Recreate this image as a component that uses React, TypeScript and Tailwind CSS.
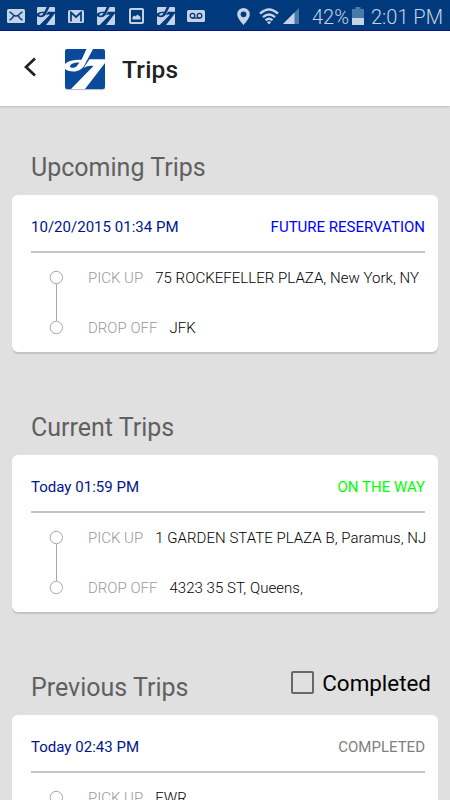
import type { ReactNode } from "react";

type Trip = {
  title: string;
  date: string;
  status: string;
  statusClass: string;
  pickUp: string;
  dropOff: string;
};

const trips: Trip[] = [
  {
    title: "Upcoming Trips",
    date: "10/20/2015 01:34 PM",
    status: "FUTURE RESERVATION",
    statusClass: "text-[#0000ff]",
    pickUp: "75 ROCKEFELLER PLAZA, New York, NY",
    dropOff: "JFK",
  },
  {
    title: "Current Trips",
    date: "Today 01:59 PM",
    status: "ON THE WAY",
    statusClass: "text-[#00ff00]",
    pickUp: "1 GARDEN STATE PLAZA B, Paramus, NJ",
    dropOff: "4323 35 ST, Queens,",
  },
  {
    title: "Previous Trips",
    date: "Today 02:43 PM",
    status: "COMPLETED",
    statusClass: "text-[#808080]",
    pickUp: "EWR",
    dropOff: "",
  },
];

// "d7" mark, shared by the status bar and the header
const LogoMark = () => (
  <>
    <path
      fillRule="evenodd"
      d="M21.5 0H28L19.5 16C17.5 20 13.5 22.5 8.5 22.5C4.5 22.5 1.5 21.5 0 20V15C3 12 8 10.7 16.5 10.7ZM5 17.5C5.5 19.3 9.5 19.2 11.5 17.5L14.5 13.6C10.5 13.4 5 14.8 5 17.5Z"
    />
    <path d="M24.5 10.3H40V14L20 40H6L28.5 17C25 16.2 22 17 18.5 19Z" />
  </>
);

const StatusLogo = () => (
  <svg width="18" height="18" viewBox="0 0 40 40" className="shrink-0">
    <rect width="40" height="40" rx="2" fill="#c5d3e6" />
    <g fill="#003a7d">
      <LogoMark />
    </g>
  </svg>
);

const StatusBar = () => (
  <div className="flex h-[31px] shrink-0 items-center border-b border-[#000080] bg-[#003a7d] pt-[2px] text-[#c5d3e6]">
    <svg width="18" height="14" viewBox="0 0 18 14" className="ml-[7px] shrink-0">
      <rect width="18" height="14" rx="1.5" fill="currentColor" />
      <path
        d="M2.5 3C5 3.5 6 7 9 7S13 3.5 15.5 3M2.5 11C4.5 10.5 5.5 8.5 6.8 7M15.5 11C13.5 10.5 12.5 8.5 11.2 7"
        fill="none"
        stroke="#003a7d"
        strokeWidth="1.5"
      />
    </svg>
    <div className="-mt-px ml-3 flex">
      <StatusLogo />
    </div>
    <svg width="16" height="13" viewBox="0 0 16 13" className="ml-[13px] shrink-0">
      <rect width="16" height="13" rx="1.5" fill="currentColor" />
      <path d="M3 11.5V2.5L8 7L13 2.5V11.5" fill="none" stroke="#003a7d" strokeWidth="1.7" />
    </svg>
    <div className="-mt-px ml-[13px] flex">
      <StatusLogo />
    </div>
    <svg width="15" height="16" viewBox="0 0 15 16" className="ml-[14px] shrink-0">
      <rect x="1" y="1" width="13" height="14" rx="1" fill="none" stroke="currentColor" strokeWidth="2" />
      <path d="M3.5 11.5V9L5.5 7.5L6.5 8.5L8.5 6.5L11.5 9V11.5Z" fill="currentColor" />
    </svg>
    <div className="-mt-px ml-[13px] flex">
      <StatusLogo />
    </div>
    <svg width="18" height="12" viewBox="0 0 18 12" className="ml-3 shrink-0">
      <rect width="18" height="12" rx="1.5" fill="currentColor" />
      <g fill="none" stroke="#003a7d" strokeWidth="1.3">
        <circle cx="5.5" cy="5.7" r="2.3" />
        <circle cx="12.5" cy="5.7" r="2.3" />
        <path d="M5.5 8H12.5" />
      </g>
    </svg>
    <svg width="13" height="17" viewBox="0 0 13 17" className="ml-8 shrink-0">
      <path
        d="M6.5 0A6.3 6.3 0 0 0 .2 6.3C.2 10.5 6.5 17 6.5 17S12.8 10.5 12.8 6.3A6.3 6.3 0 0 0 6.5 0ZM6.5 3.4A2.9 2.9 0 1 1 6.5 9.2A2.9 2.9 0 0 1 6.5 3.4Z"
        fill="currentColor"
      />
    </svg>
    <svg width="20" height="17" viewBox="0 0 20 17" className="ml-[9px] shrink-0">
      <g fill="none" stroke="currentColor" strokeWidth="2.4">
        <path d="M1 5.6Q10 -2.8 19 5.6" />
        <path d="M4 9.2Q10 3.6 16 9.2" />
        <path d="M6.6 12.4Q10 9.2 13.4 12.4" />
      </g>
      <path d="M7.8 14Q10 12.3 12.2 14L10 16.5Z" fill="currentColor" />
    </svg>
    <svg width="16" height="16" viewBox="0 0 16 16" className="ml-1 shrink-0">
      <path d="M0 16L16 0V16Z" fill="#4b78ab" />
      <path d="M0 16L11.5 4.5V16Z" fill="currentColor" />
    </svg>
    <span className="ml-[13px] mt-px w-[39px] whitespace-nowrap text-[20px] leading-6 font-light">42%</span>
    <svg width="12" height="18" viewBox="0 0 12 18" className="-mt-px ml-[1px] shrink-0">
      <path d="M0 2H3.5V0H8.5V2H12V11H0Z" fill="#4b78ab" />
      <path d="M0 11H12V18H0Z" fill="currentColor" />
    </svg>
    <span className="ml-[7px] mt-px whitespace-nowrap text-[20px] leading-6 font-light">2:01 PM</span>
  </div>
);

const Header = () => (
  <header className="flex h-[75px] shrink-0 items-center bg-white shadow-[0_1px_2px_#bdbdbd]">
    <svg width="12" height="20" viewBox="0 0 12 20" className="ml-6 -mt-[4px]">
      <path d="M11 1.5L2 10L11 18.5" fill="none" stroke="#212121" strokeWidth="2.7" />
    </svg>
    <svg width="40" height="40" viewBox="0 0 40 40" className="ml-[29px] rounded-[2px] shadow-[0_1px_1px_#bbb]">
      <rect width="40" height="40" fill="#0b4a9b" />
      <g fill="#fff">
        <LogoMark />
      </g>
    </svg>
    <h1 className="ml-[17px] mt-[2px] text-[24.5px] leading-8 font-medium tracking-[0.2px] text-[#212121]">Trips</h1>
  </header>
);

const Stop = ({ label, children }: { label: string; children: ReactNode }) => (
  <div className="flex h-[50px] items-center gap-3 whitespace-nowrap text-[15px]">
    <span className="font-light text-[#999]">{label}</span>
    <span className="font-light tracking-[0.04px] text-black">{children}</span>
  </div>
);

const TripCard = ({ trip }: { trip: Trip }) => (
  <div className="mr-[12.5px] ml-3 h-[157px] rounded-[6px] bg-white pr-[12.5px] pl-[19px] shadow-[0_2px_1px_#c4c4c4]">
    <div className="flex h-[58px] items-center justify-between border-b-2 border-[#c4c4c4] pt-[9px] text-[15px]">
      <span className="tracking-[0.02px] text-[#00148c]">{trip.date}</span>
      <span className={trip.statusClass}>{trip.status}</span>
    </div>
    <div className="flex">
      <svg width="14" height="100" viewBox="0 0 14 100" className="mr-[25px] ml-[18px] shrink-0">
        <g fill="none" stroke="#a8a8a8">
          <circle cx="7.3" cy="24.5" r="6.2" />
          <path d="M7.5 31V68" />
          <circle cx="7.3" cy="74.5" r="6.2" />
        </g>
      </svg>
      <div>
        <Stop label="PICK UP">{trip.pickUp}</Stop>
        <Stop label="DROP OFF">{trip.dropOff}</Stop>
      </div>
    </div>
  </div>
);

const App: React.FC = () => {
  return (
    <div className="flex h-[800px] w-[450px] flex-col overflow-hidden bg-[#e0e0e0] font-[Roboto,sans-serif]">
      <StatusBar />
      <Header />
      <main className="shrink-0 pt-[29px]">
        {trips.map((trip) => (
          <section key={trip.title} className="h-[260px]">
            <div className="flex h-[60px] items-center justify-between pr-[19px] pl-[31px]">
              <h2 className="pt-[6px] text-[25px] leading-8 text-[#606060]">{trip.title}</h2>
              {trip.title === "Previous Trips" && (
                <label className="-mt-[3px] flex items-center gap-[8px] text-[22.4px] text-black">
                  <span className="-mt-px size-[23px] rounded-[2px] border-2 border-[#686868]" />
                  Completed
                </label>
              )}
            </div>
            <TripCard trip={trip} />
          </section>
        ))}
      </main>
    </div>
  );
};

export default App;
